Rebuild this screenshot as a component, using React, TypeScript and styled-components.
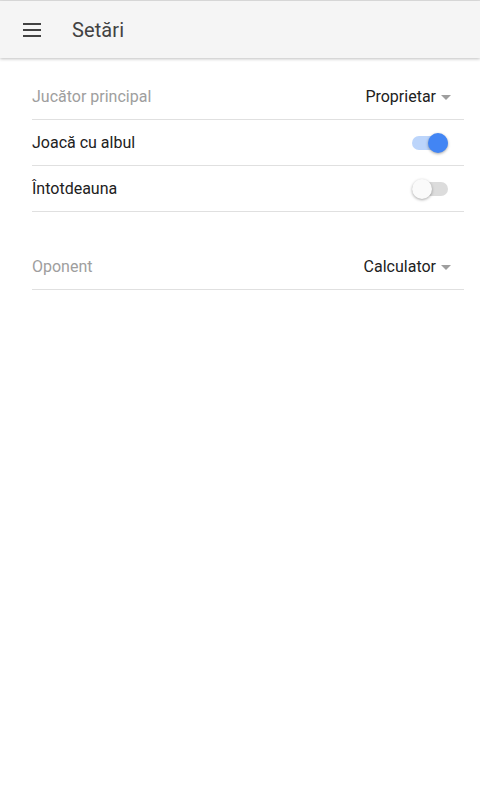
import React from "react";
import styled, { createGlobalStyle } from "styled-components";

const Global = createGlobalStyle`
  html, body { margin: 0; padding: 0; background: #fff; }
  body { font-family: Roboto, "Noto Sans", Arial, sans-serif; }
`;

const Page = styled.div`
  width: 480px;
  min-height: 800px;
  background: #fff;
  border-top: 1px solid #e0e0e0;
  box-sizing: border-box;
`;

const Toolbar = styled.header`
  height: 57px;
  background: #f5f5f5;
  display: flex;
  align-items: center;
  padding: 0 0 0 22px;
  gap: 30px;
  box-shadow: 0 1px 3px rgba(0, 0, 0, 0.25);
  position: relative;
`;

const MenuIcon = styled.svg`
  width: 20px;
  height: 20px;
  display: block;
`;

const Title = styled.h1`
  margin: 0;
  font-size: 20px;
  font-weight: 400;
  color: #424242;
  letter-spacing: 0.1px;
`;

const Content = styled.main`
  padding: 16px 16px 0 32px;
  display: flex;
  flex-direction: column;
`;

const Group = styled.section<{ $gap?: number }>`
  display: flex;
  flex-direction: column;
  margin-top: ${(p) => p.$gap ?? 0}px;
`;

const Row = styled.div`
  height: 45px;
  display: flex;
  align-items: center;
  justify-content: space-between;
  border-bottom: 1px solid #e0e0e0;
`;

const Label = styled.span<{ $muted?: boolean }>`
  font-size: 16px;
  color: ${(p) => (p.$muted ? "#9e9e9e" : "#212121")};
`;

const Select = styled.div`
  display: flex;
  align-items: center;
  gap: 5px;
  font-size: 16px;
  color: #212121;
  padding-right: 13px;
`;

const Caret = styled.span`
  width: 0;
  height: 0;
  border-left: 5px solid transparent;
  border-right: 5px solid transparent;
  border-top: 5px solid #9e9e9e;
  margin-top: 1px;
`;

const Switch = styled.div<{ $on?: boolean }>`
  position: relative;
  width: 36px;
  height: 14px;
  border-radius: 7px;
  background: ${(p) => (p.$on ? "#bcd5fb" : "#dcdcdc")};
  margin-right: 16px;
`;

const Thumb = styled.span<{ $on?: boolean }>`
  position: absolute;
  top: -3px;
  left: ${(p) => (p.$on ? "16px" : "0")};
  width: 20px;
  height: 20px;
  border-radius: 50%;
  background: ${(p) => (p.$on ? "#4285f4" : "#fafafa")};
  box-shadow: 0 1px 3px rgba(0, 0, 0, 0.35);
`;

export default function App() {
  return (
    <>
      <Global />
      <Page>
        <Toolbar>
          <MenuIcon viewBox="0 0 20 20">
            <rect x="1" y="3" width="18" height="2" fill="#424242" />
            <rect x="1" y="9" width="18" height="2" fill="#424242" />
            <rect x="1" y="15" width="18" height="2" fill="#424242" />
          </MenuIcon>
          <Title>Setări</Title>
        </Toolbar>
        <Content>
          <Group>
            <Row>
              <Label $muted>Jucător principal</Label>
              <Select>
                Proprietar <Caret />
              </Select>
            </Row>
            <Row>
              <Label>Joacă cu albul</Label>
              <Switch $on>
                <Thumb $on />
              </Switch>
            </Row>
            <Row>
              <Label>Întotdeauna</Label>
              <Switch>
                <Thumb />
              </Switch>
            </Row>
          </Group>
          <Group $gap={32}>
            <Row>
              <Label $muted>Oponent</Label>
              <Select>
                Calculator <Caret />
              </Select>
            </Row>
          </Group>
        </Content>
      </Page>
    </>
  );
}
